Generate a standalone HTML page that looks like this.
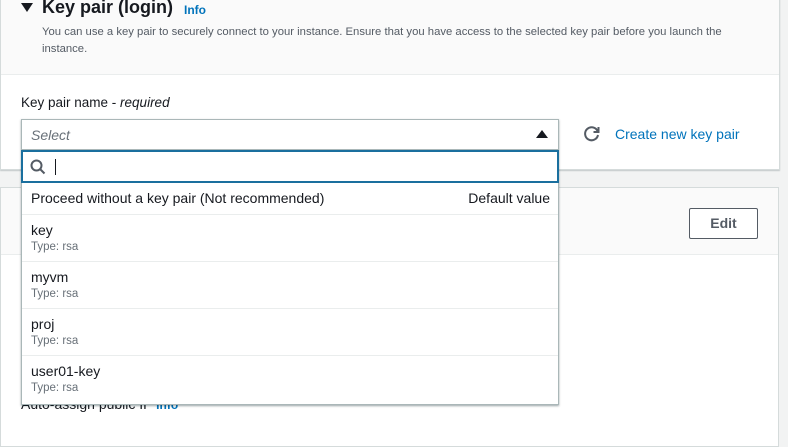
<!DOCTYPE html>
<html><head><style>
*{margin:0;padding:0;box-sizing:border-box}
body{width:788px;height:421px;overflow:hidden;background:#f2f3f3;font-family:"Liberation Sans",sans-serif;color:#16191f;position:relative}
.abs{position:absolute}
.card1{left:0;top:-2px;width:780px;height:172px;background:#fff;border:1px solid #d5dbdb;box-shadow:0 1px 1px rgba(0,28,36,.2)}
.hdr{left:1px;top:0;width:778px;height:75px;background:#fafafa;border-bottom:1px solid #eaeded}
.card2{left:0;top:187px;width:779px;height:260px;background:#fff;border:1px solid #d5dbdb}
.hdr2{left:1px;top:188px;width:777px;height:67px;background:#fafafa;border-bottom:1px solid #eaeded}
.dd{left:21px;top:119px;width:538px;background:#fff}
.item{border-top:1px solid #eaeded;padding-left:9px;position:relative}
.nm{font-size:14px;color:#16191f}
.ty{font-size:11.5px;color:#687078;margin-top:3px}
</style></head><body>
<div class="abs card1"></div>
<div class="abs hdr"></div>
<div class="abs" style="left:21px;top:3px;width:0;height:0;border-left:6px solid transparent;border-right:6px solid transparent;border-top:9px solid #16191f"></div>
<div class="abs" style="left:42px;top:-3px;font-size:18px;font-weight:bold">Key pair (login)</div>
<div class="abs" style="left:184px;top:3px;font-size:12px;font-weight:bold;color:#0073bb">Info</div>
<div class="abs" style="left:42px;top:24px;font-size:11.3px;color:#545b64;line-height:17px;width:710px">You can use a key pair to securely connect to your instance. Ensure that you have access to the selected key pair before you launch the instance.</div>
<div class="abs" style="left:21px;top:95px;font-size:13.5px">Key pair name - <i>required</i></div>
<svg class="abs" style="left:583px;top:125px" width="18" height="18" viewBox="0 0 18 18"><path d="M14.5 6A6.5 6.5 0 1 0 15 10" fill="none" stroke="#545b64" stroke-width="2"/><path d="M15.5 2v5h-5" fill="none" stroke="#545b64" stroke-width="2"/></svg>
<div class="abs" style="left:615px;top:126px;font-size:14px;color:#0073bb">Create new key pair</div>
<div class="abs card2"></div>
<div class="abs hdr2"></div>
<div class="abs" style="left:689px;top:208px;width:69px;height:31px;border:1px solid #545b64;border-radius:2px;background:#fff;font-size:14px;font-weight:bold;color:#545b64;text-align:center;line-height:29px">Edit</div>
<div class="abs" style="left:21px;top:396px;font-size:14px">Auto-assign public IP <b style="color:#0073bb;font-size:12px">Info</b></div>
<div class="abs dd" style="box-shadow:0 1px 2px rgba(0,28,36,.4);border:1px solid #aab7b8;border-top:none">
 <div style="height:31px;border:1px solid #aab7b8;margin:0 -1px;position:relative;font-size:14px;color:#687078;font-style:italic;padding:7px 9px">Select
  <div class="abs" style="right:10px;top:10px;width:0;height:0;border-left:6px solid transparent;border-right:6px solid transparent;border-bottom:8px solid #16191f"></div></div>
 <div style="height:33px;border:2px solid #1a6f9e;margin:0 -1px;position:relative">
  <svg class="abs" style="left:7px;top:7px" width="16" height="16" viewBox="0 0 16 16"><circle cx="6.5" cy="6.5" r="5" fill="none" stroke="#545b64" stroke-width="2"/><path d="M10 10l4.5 4.5" stroke="#545b64" stroke-width="2"/></svg>
  <div class="abs" style="left:32px;top:7px;width:1px;height:16px;background:#16191f"></div></div>
 <div class="item" style="height:31px;border-top:none"><span class="nm abs" style="left:9px;top:7px">Proceed without a key pair (Not recommended)</span><span class="nm abs" style="right:8px;top:7px">Default value</span></div>
 <div class="item" style="height:47px"><div class="nm" style="padding-top:7px">key</div><div class="ty">Type: rsa</div></div>
 <div class="item" style="height:47px"><div class="nm" style="padding-top:7px">myvm</div><div class="ty">Type: rsa</div></div>
 <div class="item" style="height:47px"><div class="nm" style="padding-top:7px">proj</div><div class="ty">Type: rsa</div></div>
 <div class="item" style="height:49px"><div class="nm" style="padding-top:7px">user01-key</div><div class="ty">Type: rsa</div></div>
</div>
</body></html>
